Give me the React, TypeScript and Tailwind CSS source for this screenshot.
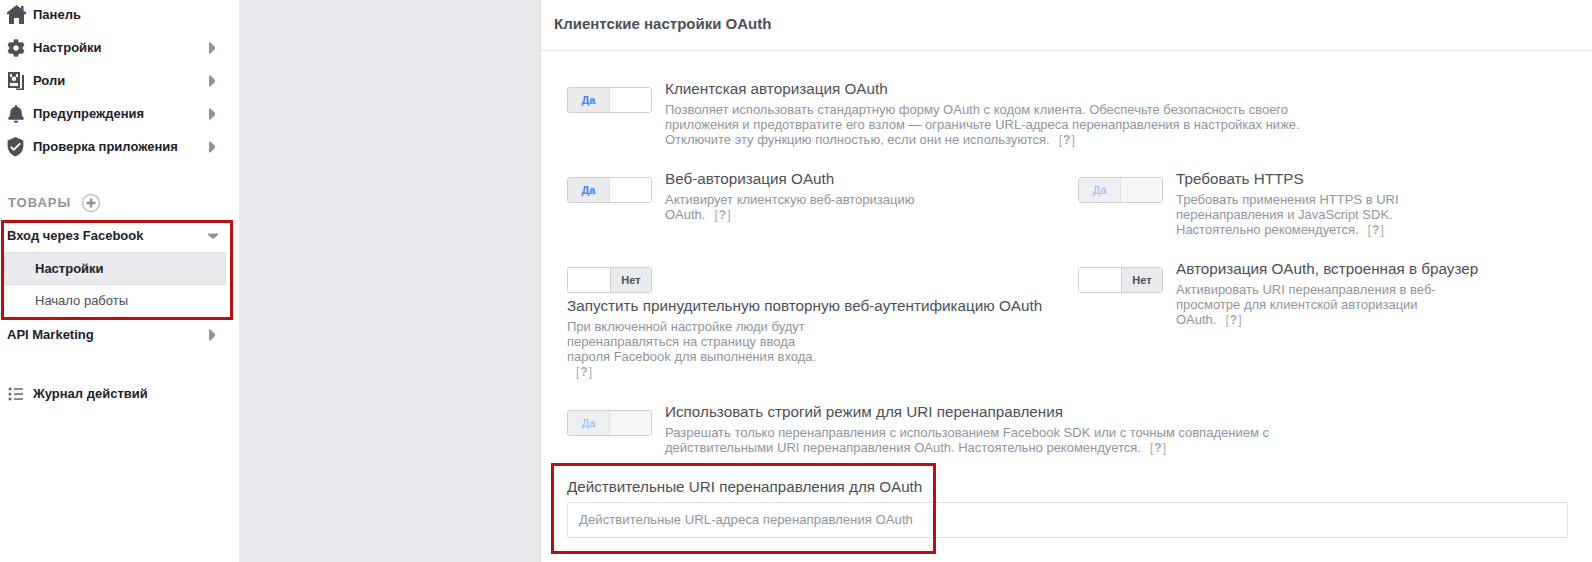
import { FaBell, FaCog } from "react-icons/fa";
import { MdVerifiedUser } from "react-icons/md";
import type { ReactNode } from "react";

function Caret({ down = false }: { down?: boolean }) {
  return (
    <svg width="12" height="12" viewBox="0 0 12 12" className="shrink-0">
      {down ? <path d="M1 3.500h10v1.500L7 8.500H5L1 5z" fill="#8d949e" /> : <path d="M3 .5h1.500L9 5v2l-4.500 4.500H3z" fill="#8d949e" />}
    </svg>
  );
}

function HomeIcon() {
  return (
    <svg width="19" height="19" viewBox="0 0 19 19" className="text-[#4b4f56]">
      <path fill="currentColor" d="M9.500 0 14 3.500V1h2.500v4.500L19 7.500V9.500l-2-.5V19h-5v-6H7v6H2V9l-2 .5V7.500z" />
    </svg>
  );
}

function RolesIcon() {
  return (
    <svg width="18" height="20" viewBox="0 0 18 20" className="text-[#4b4f56]">
      <path fill="currentColor" fillRule="evenodd" d="M1 1h12v16H1zM3 3v3h2V3zM9 3v3h2V3zM7 5.500a2.300 2.300 0 1 0 0 4.600 2.300 2.300 0 0 0 0-4.600zM3 12v3h8v-3z" />
      <path fill="currentColor" d="M15 4h2v15H9v-1.500h6z" />
    </svg>
  );
}

function ListIcon() {
  return (
    <svg width="16" height="16" viewBox="0 0 16 16" className="ml-[1px] text-[#606770]">
      <g fill="currentColor">
        <circle cx="2" cy="3" r="1.500" />
        <circle cx="2" cy="8" r="1.500" />
        <circle cx="2" cy="13" r="1.500" />
        <rect x="6" y="2.300" width="9" height="1.500" />
        <rect x="6" y="7.300" width="9" height="1.500" />
        <rect x="6" y="12.300" width="9" height="1.500" />
      </g>
    </svg>
  );
}

function NavItem({ icon, label, caret = true }: { icon: ReactNode; label: string; caret?: boolean }) {
  return (
    <div className="flex h-[33px] items-center pl-[7px] pr-[21px]">
      <div className="flex w-[26px] shrink-0 items-center text-[#4b4f56]">{icon}</div>
      <span className="flex-1 text-[13px] font-bold text-[#1d2129]">{label}</span>
      {caret && <Caret />}
    </div>
  );
}

function Toggle({ on, disabled = false }: { on: boolean; disabled?: boolean }) {
  return (
    <div className="flex h-[26px] w-[85px] shrink-0 overflow-hidden rounded-[3px] border border-[#ccd0d5] text-[11px] font-bold">
      {on ? (
        <>
          <div className={`flex w-[42px] items-center justify-center border-r border-[#dddfe2] ${disabled ? "bg-[#edeff2] font-normal text-[#8fb3ff]" : "bg-[#e9ebee] text-[#4080ff]"}`}>Да</div>
          <div className={`flex-1 ${disabled ? "bg-[#f5f6f7]" : "bg-white"}`} />
        </>
      ) : (
        <>
          <div className="flex-1 bg-white" />
          <div className="flex w-[41px] items-center justify-center border-l border-[#ccd0d5] bg-[#e9ebee] text-[#4b4f56]">Нет</div>
        </>
      )}
    </div>
  );
}

function Hint() {
  return (
    <span className="ml-[9px] text-[12px] text-[#a5a8ae]">
      [<b className="px-[1px]">?</b>]
    </span>
  );
}

function Title({ children }: { children: ReactNode }) {
  return <div className="text-[15.25px] leading-[20px] text-[#4b4f56]">{children}</div>;
}

function Desc({ children }: { children: ReactNode }) {
  return <div className="mt-[3px] text-[13px] leading-[15px] text-[#90949c]">{children}</div>;
}

export default function App() {
  return (
    <div className="flex h-[562px] w-[1592px] overflow-hidden bg-[#e9ebee] font-['Liberation_Sans',Arial,sans-serif]">
      {/* Sidebar */}
      <aside className="-mt-[2px] w-[239px] shrink-0 bg-white">
        <NavItem icon={<HomeIcon />} label="Панель" caret={false} />
        <NavItem icon={<FaCog size={18} />} label="Настройки" />
        <NavItem icon={<RolesIcon />} label="Роли" />
        <NavItem icon={<FaBell size={18} />} label="Предупреждения" />
        <NavItem icon={<MdVerifiedUser size={21} className="-ml-[2px]" />} label="Проверка приложения" />

        <div className="mt-[25px] flex h-[30px] items-center pl-[8px]">
          <span className="text-[13px] font-bold tracking-[1px] text-[#90949c]">ТОВАРЫ</span>
          <svg width="20" height="20" viewBox="0 0 20 20" className="ml-[10px]">
            <circle cx="10" cy="10" r="8.500" fill="none" stroke="#bec2c9" strokeWidth="1.500" />
            <path d="M10 5.500v9M5.500 10h9" stroke="#90949c" strokeWidth="2.500" />
          </svg>
        </div>

        <div className="ml-[1px] mt-[2px] h-[100px] w-[232px] border-[3px] border-[#bb0e0e]">
          <div className="flex h-[29px] items-center pb-[4px] pl-[3px] pr-[11px]">
            <span className="flex-1 text-[13px] font-bold text-[#1d2129]">Вход через Facebook</span>
            <Caret down />
          </div>
          <div className="mr-[4px] flex h-[33px] items-center rounded-[2px] border border-[#dddfe2] bg-[#e9ebee] pl-[30px] text-[13px] font-bold text-[#1d2129]">Настройки</div>
          <div className="flex h-[32px] items-center pl-[31px] text-[13px] text-[#4b4f56]">Начало работы</div>
        </div>

        <div className="-mt-[2px] flex h-[33px] items-center pl-[7px] pr-[21px]">
          <span className="flex-1 text-[13px] font-bold text-[#1d2129]">API Marketing</span>
          <Caret />
        </div>

        <div className="mt-[26px]">
          <NavItem icon={<ListIcon />} label="Журнал действий" caret={false} />
        </div>
      </aside>

      {/* Gray gap */}
      <div className="w-[301px] shrink-0" />

      {/* Panel */}
      <main className="flex-1 border-l border-[#dddfe2] bg-white">
        <div className="flex h-[51px] items-center border-b border-[#e5e6e9] pb-[1px] pl-[13px] text-[15px] font-bold text-[#4b4f56]">
          Клиентские настройки OAuth
        </div>

        <div className="pl-[26px] pr-[24px] pt-[27px]">
          <div className="flex h-[90px] gap-[13px] pt-[9px]">
            <Toggle on />
            <div className="-mt-[8px]">
              <Title>Клиентская авторизация OAuth</Title>
              <Desc>
                Позволяет использовать стандартную форму OAuth с кодом клиента. Обеспечьте безопасность своего<br />
                приложения и предотвратите его взлом — ограничьте URL-адреса перенаправления в настройках ниже.<br />
                Отключите эту функцию полностью, если они не используются.<Hint />
              </Desc>
            </div>
          </div>

          <div className="grid h-[90px] grid-cols-[511px_1fr] pt-[9px]">
            <div className="flex gap-[13px]">
              <Toggle on />
              <div className="-mt-[8px]">
                <Title>Веб-авторизация OAuth</Title>
                <Desc>
                  Активирует клиентскую веб-авторизацию<br />
                  OAuth.<Hint />
                </Desc>
              </div>
            </div>
            <div className="flex gap-[13px]">
              <Toggle on disabled />
              <div className="-mt-[8px]">
                <Title>Требовать HTTPS</Title>
                <Desc>
                  Требовать применения HTTPS в URI<br />
                  перенаправления и JavaScript SDK.<br />
                  Настоятельно рекомендуется.<Hint />
                </Desc>
              </div>
            </div>
          </div>

          <div className="grid h-[143px] grid-cols-[511px_1fr] pt-[9px]">
            <div>
              <Toggle on={false} />
              <div className="mt-[3px]">
                <Title>Запустить принудительную повторную веб-аутентификацию OAuth</Title>
                <Desc>
                  При включенной настройке люди будут<br />
                  перенаправляться на страницу ввода<br />
                  пароля Facebook для выполнения входа.<br />
                  <Hint />
                </Desc>
              </div>
            </div>
            <div className="flex gap-[13px]">
              <Toggle on={false} />
              <div className="-mt-[8px]">
                <Title>Авторизация OAuth, встроенная в браузер</Title>
                <Desc>
                  Активировать URI перенаправления в веб-<br />
                  просмотре для клиентской авторизации<br />
                  OAuth.<Hint />
                </Desc>
              </div>
            </div>
          </div>

          <div className="flex h-[53px] gap-[13px] pt-[9px]">
            <Toggle on disabled />
            <div className="-mt-[8px]">
              <Title>Использовать строгий режим для URI перенаправления</Title>
              <Desc>
                Разрешать только перенаправления с использованием Facebook SDK или с точным совпадением с<br />
                действительными URI перенаправления OAuth. Настоятельно рекомендуется.<Hint />
              </Desc>
            </div>
          </div>

          <div className="relative mt-[9px]">
            <div className="pt-[14px]">
              <div className="text-[15.2px] leading-[20px] text-[#4b4f56]">Действительные URI перенаправления для OAuth</div>
              <div className="mt-[5px] flex h-[36px] items-center rounded-[2px] border border-[#dddfe2] pl-[11px] text-[13.2px] text-[#90949c]">
                Действительные URL-адреса перенаправления OAuth
              </div>
            </div>
            <div className="pointer-events-none absolute -left-[16px] top-0 h-[91px] w-[385px] border-[3px] border-[#bb0e0e]" />
          </div>
        </div>
      </main>
    </div>
  );
}
